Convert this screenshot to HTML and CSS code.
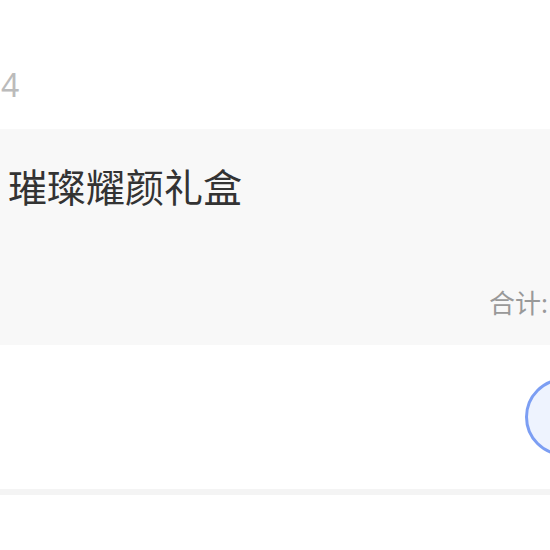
FILE: index.html
```html
<!DOCTYPE html>
<html lang="zh-CN">

<head>
    <meta charset="UTF-8">
    <meta name="viewport" content="width=device-width, initial-scale=1.0">
    <title>订单</title>
    <link rel="stylesheet" href="styles.css">
</head>

<body>
    <div class="page">
        <div class="order-head">
            <span class="order-no">4</span>
        </div>
        <div class="goods">
            <h2 class="goods-name">璀璨耀颜礼盒</h2>
            <div class="goods-total">合计:</div>
        </div>
        <div class="order-actions">
            <button class="round-btn" type="button"></button>
        </div>
        <div class="divider"></div>
    </div>
</body>

</html>
```

FILE: styles.css
```css
* {
    margin: 0;
    padding: 0;
    box-sizing: border-box;
    font-family: "Noto Sans", "Noto Sans CJK SC", sans-serif;
}

body {
    background: #fff;
    overflow: hidden;
    width: 550px;
    height: 550px;
}

.page {
    width: 550px;
}

.order-head {
    height: 129px;
    padding-top: 63px;
}

.order-no {
    display: block;
    font-size: 32px;
    line-height: 44px;
    color: #bbb;
    margin-left: 1px;
}

.goods {
    background: #f8f8f8;
    height: 216px;
    padding: 30px 0 0 8px;
    display: flex;
    flex-direction: column;
}

.goods-name {
    font-size: 39px;
    font-weight: normal;
    line-height: 56px;
    color: #333;
}

.goods-total {
    margin-top: 70px;
    padding-left: 481px;
    white-space: nowrap;
    font-size: 26px;
    line-height: 36px;
    color: #999;
}

.order-actions {
    height: 144px;
    display: flex;
    align-items: center;
    justify-content: flex-end;
}

.round-btn {
    width: 78px;
    height: 78px;
    flex-shrink: 0;
    margin-right: -53px;
    border-radius: 50%;
    border: 3px solid #7c9ef3;
    background: #eef3fe;
}

.divider {
    height: 6px;
    background: #f4f4f4;
}
```
